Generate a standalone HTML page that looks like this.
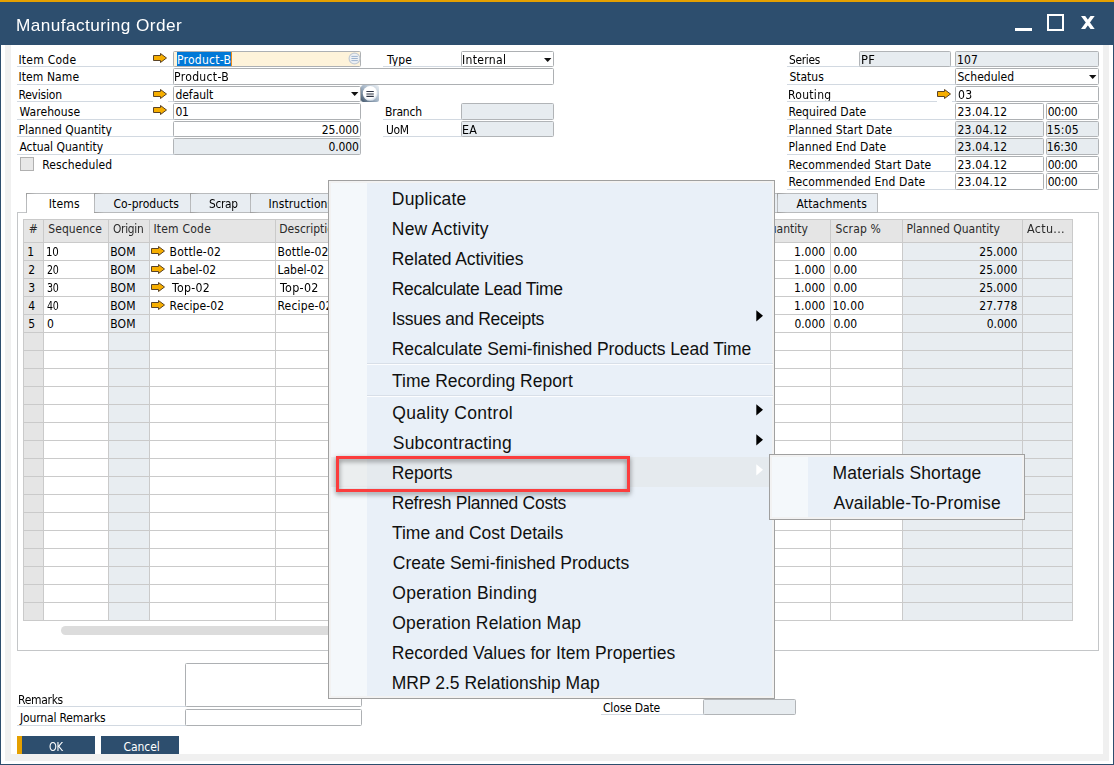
<!DOCTYPE html><html><head><meta charset="utf-8"><title>Manufacturing Order</title><style>
*{box-sizing:border-box;margin:0;padding:0}
html,body{width:1114px;height:765px;overflow:hidden;background:#fff}
body{position:relative;font-family:"DejaVu Sans Condensed", "Liberation Sans", sans-serif;font-size:12px;color:#000}
.lb{font-family:"Liberation Sans", sans-serif}
.a{position:absolute}
.t{position:absolute;white-space:nowrap}
.ul{position:absolute;height:1px;background:#d2d9e1}
.f{position:absolute;height:16px;border:1px solid #adb0b3;border-radius:1.5px;background:#fff}
.f.d{background:#e7ecf0;border-color:#b1b4b7}
.tab{position:absolute;top:193px;height:20px;border:1px solid #b9bbbd;background:#e8edf2}
.tab.on{background:#fff;border-bottom:none;height:20px;z-index:2}
.btn{position:absolute;top:736px;height:18px;width:78px;background:#2d4e6e}
</style></head><body>
<div class="a" style="left:0;top:0;width:1114px;height:765px;border:1px solid #2d4e6e;border-top:none"></div>
<div class="a" style="left:5px;top:45px;width:1104px;height:716px;background:#f0f0f0"></div>
<div class="a" style="left:11px;top:45px;width:1092px;height:709px;background:#fff"></div>
<div class="a" style="left:0;top:0;width:1114px;height:45px;background:#2d4e6e"></div>
<div class="a" style="left:0;top:0;width:1114px;height:2px;background:#e5a000"></div>
<div class="t lb" style="left:15.99px;top:14.50px;line-height:22px;height:22px;font-size:17px;letter-spacing:0.425px;transform:scaleX(1.0129);transform-origin:0 0;color:#fff">Manufacturing Order</div>
<div class="a" style="left:1015px;top:28px;width:17px;height:3px;background:#fff"></div>
<div class="a" style="left:1047px;top:14px;width:17px;height:17px;border:2px solid #fff"></div>
<svg class="a" style="left:1080.7px;top:15.9px" width="14" height="14" viewBox="0 0 14 14"><path d="M0 0H4.2L13.7 13.1H9.5Z M9.5 0H13.7L4.2 13.1H0Z" fill="#fff"/></svg>
<div class="t" style="left:18.40px;top:52.00px;line-height:16px;height:16px;letter-spacing:0.262px">Item Code</div>
<div class="ul" style="left:17px;top:66px;width:157px"></div>
<div class="t" style="left:18.40px;top:69.00px;line-height:16px;height:16px;letter-spacing:0.099px">Item Name</div>
<div class="ul" style="left:17px;top:84px;width:157px"></div>
<div class="t" style="left:18.40px;top:87.00px;line-height:16px;height:16px;letter-spacing:-0.203px">Revision</div>
<div class="ul" style="left:17px;top:101px;width:157px"></div>
<div class="t" style="left:19.40px;top:104.00px;line-height:16px;height:16px;letter-spacing:0.106px">Warehouse</div>
<div class="ul" style="left:17px;top:119px;width:157px"></div>
<div class="t" style="left:18.40px;top:122.00px;line-height:16px;height:16px;letter-spacing:0.013px">Planned Quantity</div>
<div class="ul" style="left:17px;top:136px;width:157px"></div>
<div class="t" style="left:19.40px;top:139.00px;line-height:16px;height:16px;letter-spacing:-0.013px">Actual Quantity</div>
<div class="ul" style="left:17px;top:154px;width:157px"></div>
<svg class="a" style="left:153px;top:53px;background:#fff" width="15" height="13" viewBox="0 0 15 13"><path d="M0.5 2.5H7.5V0.5L13.5 5L7.5 9.5V7.5H0.5Z" fill="#f6ae00" stroke="#5a4326" stroke-width="1" stroke-linejoin="miter"/></svg>
<svg class="a" style="left:153px;top:89px;background:#fff" width="15" height="13" viewBox="0 0 15 13"><path d="M0.5 2.5H7.5V0.5L13.5 5L7.5 9.5V7.5H0.5Z" fill="#f6ae00" stroke="#5a4326" stroke-width="1" stroke-linejoin="miter"/></svg>
<svg class="a" style="left:153px;top:105px;background:#fff" width="15" height="13" viewBox="0 0 15 13"><path d="M0.5 2.5H7.5V0.5L13.5 5L7.5 9.5V7.5H0.5Z" fill="#f6ae00" stroke="#5a4326" stroke-width="1" stroke-linejoin="miter"/></svg>
<div class="f" style="left:173px;top:51px;width:188px;background:#fef3da"><div class="a" style="left:3px;top:0;width:54px;height:14px;background:#0078d7"></div><div class="a" style="left:57px;top:0;width:1px;height:14px;background:#e88a1a"></div></div>
<div class="t" style="left:177.00px;top:52.00px;line-height:16px;height:16px;letter-spacing:0.261px;color:#fff">Product-B</div>
<svg class="a" style="left:347.5px;top:52px" width="13" height="13" viewBox="0 0 13 13"><circle cx="6.5" cy="6.5" r="5.4" fill="#eef1f4" stroke="#c3cbd4" stroke-width="1.2"/><path d="M3.4 4.4h6.4M3.4 6.5h6.4M3.4 8.6h6.4" stroke="#9db3cf" stroke-width="1"/></svg>
<div class="f" style="left:173px;top:68px;height:17px;width:381px"></div>
<div class="t" style="left:174.39px;top:69.00px;line-height:16px;height:16px;letter-spacing:0.300px;transform:scaleX(1.0093);transform-origin:0 0">Product-B</div>
<div class="f" style="left:173px;top:86px;width:188px"></div>
<div class="t" style="left:175.40px;top:87.00px;line-height:16px;height:16px;letter-spacing:-0.009px">default</div>
<svg class="a" style="left:351px;top:92px" width="8" height="5" viewBox="0 0 8 5"><path d="M0 0H7.4L3.7 4.1Z" fill="#111"/></svg>
<svg class="a" style="left:361px;top:85px" width="18" height="17" viewBox="0 0 18 17"><defs><linearGradient id="rb" x1="0" y1="1" x2="1" y2="0"><stop offset="0" stop-color="#3f5368"/><stop offset="0.45" stop-color="#9fb0c2"/><stop offset="1" stop-color="#edf2f6"/></linearGradient><radialGradient id="rc" cx="0.45" cy="0.4" r="0.6"><stop offset="0.7" stop-color="#fff"/><stop offset="1" stop-color="#d3dde8"/></radialGradient></defs><rect x="0" y="0" width="18" height="17" rx="2.5" fill="url(#rb)"/><circle cx="9.2" cy="8.4" r="7.4" fill="url(#rc)"/><path d="M5.4 6.5h7.4M5.4 9h7.4M5.4 11.4h7.4" stroke="#2b3242" stroke-width="1.1"/></svg>
<div class="f" style="left:173px;top:103px;height:17px;width:188px"></div>
<div class="t" style="left:175.40px;top:104.00px;line-height:16px;height:16px;letter-spacing:-0.267px">01</div>
<div class="f" style="left:173px;top:121px;width:188px"></div>
<div class="t" style="left:321.70px;top:122.00px;line-height:16px;height:16px;letter-spacing:-0.139px">25.000</div>
<div class="f d" style="left:173px;top:138px;height:17px;width:188px"></div>
<div class="t" style="left:328.40px;top:139.00px;line-height:16px;height:16px;letter-spacing:-0.132px">0.000</div>
<div class="a" style="left:20px;top:157px;width:14px;height:14px;border:1px solid #b0b0b0;background:#e8e8e8"></div>
<div class="t" style="left:42.30px;top:157.00px;line-height:16px;height:16px;letter-spacing:0.100px">Rescheduled</div>
<div class="t" style="left:387.00px;top:52.00px;line-height:16px;height:16px;letter-spacing:0.112px">Type</div>
<div class="ul" style="left:383px;top:66px;width:79px"></div>
<div class="t" style="left:385.00px;top:104.00px;line-height:16px;height:16px;letter-spacing:-0.207px">Branch</div>
<div class="ul" style="left:383px;top:119px;width:79px"></div>
<div class="t" style="left:386.00px;top:122.00px;line-height:16px;height:16px;letter-spacing:-0.300px;transform:scaleX(0.9953);transform-origin:0 0">UoM</div>
<div class="ul" style="left:383px;top:136px;width:79px"></div>
<div class="f" style="left:461px;top:51px;width:93px"></div>
<div class="t" style="left:462.19px;top:52.00px;line-height:16px;height:16px;letter-spacing:0.300px;transform:scaleX(1.0076);transform-origin:0 0">Internal</div>
<svg class="a" style="left:543.5px;top:57.5px" width="8" height="5" viewBox="0 0 8 5"><path d="M0 0H7.4L3.7 4.1Z" fill="#111"/></svg>
<div class="f d" style="left:461px;top:103px;height:17px;width:93px"></div>
<div class="f d" style="left:461px;top:121px;width:93px"></div>
<div class="t" style="left:462.17px;top:122.00px;line-height:16px;height:16px;letter-spacing:0.300px;transform:scaleX(1.0340);transform-origin:0 0">EA</div>
<div class="t" style="left:789.40px;top:52.00px;line-height:16px;height:16px;letter-spacing:-0.300px;transform:scaleX(0.9850);transform-origin:0 0">Series</div>
<div class="ul" style="left:787px;top:66px;width:169px"></div>
<div class="t" style="left:789.40px;top:69.00px;line-height:16px;height:16px;letter-spacing:0.005px">Status</div>
<div class="ul" style="left:787px;top:84px;width:169px"></div>
<div class="t" style="left:788.40px;top:87.00px;line-height:16px;height:16px;letter-spacing:0.300px;transform:scaleX(1.0004);transform-origin:0 0">Routing</div>
<div class="ul" style="left:787px;top:101px;width:169px"></div>
<div class="t" style="left:788.40px;top:104.00px;line-height:16px;height:16px;letter-spacing:0.053px">Required Date</div>
<div class="ul" style="left:787px;top:119px;width:169px"></div>
<div class="t" style="left:788.40px;top:122.00px;line-height:16px;height:16px;letter-spacing:0.077px">Planned Start Date</div>
<div class="ul" style="left:787px;top:136px;width:169px"></div>
<div class="t" style="left:788.40px;top:139.00px;line-height:16px;height:16px;letter-spacing:0.077px">Planned End Date</div>
<div class="ul" style="left:787px;top:154px;width:169px"></div>
<div class="t" style="left:788.40px;top:157.00px;line-height:16px;height:16px;letter-spacing:0.128px">Recommended Start Date</div>
<div class="ul" style="left:787px;top:171px;width:169px"></div>
<div class="t" style="left:788.40px;top:174.00px;line-height:16px;height:16px;letter-spacing:0.134px">Recommended End Date</div>
<div class="ul" style="left:787px;top:189px;width:169px"></div>
<div class="f d" style="left:859px;top:51px;width:92px"></div>
<div class="t" style="left:860.53px;top:52.00px;line-height:16px;height:16px;letter-spacing:0.300px;transform:scaleX(1.0669);transform-origin:0 0">PF</div>
<div class="f d" style="left:955px;top:51px;width:144px"></div>
<div class="t" style="left:956.90px;top:52.00px;line-height:16px;height:16px;letter-spacing:0.133px">107</div>
<div class="f" style="left:955px;top:68px;height:17px;width:144px"></div>
<div class="t" style="left:957.50px;top:69.00px;line-height:16px;height:16px;letter-spacing:0.010px">Scheduled</div>
<svg class="a" style="left:1088.5px;top:74.5px" width="8" height="5" viewBox="0 0 8 5"><path d="M0 0H7.4L3.7 4.1Z" fill="#111"/></svg>
<svg class="a" style="left:937px;top:89px;background:#fff" width="15" height="13" viewBox="0 0 15 13"><path d="M0.5 2.5H7.5V0.5L13.5 5L7.5 9.5V7.5H0.5Z" fill="#f6ae00" stroke="#5a4326" stroke-width="1" stroke-linejoin="miter"/></svg>
<div class="f" style="left:955px;top:86px;width:144px"></div>
<div class="t" style="left:957.50px;top:87.00px;line-height:16px;height:16px;letter-spacing:0.300px;transform:scaleX(1.0101);transform-origin:0 0">03</div>
<div class="f" style="left:955px;top:103px;width:89px;height:17px"></div>
<div class="f" style="left:1046px;top:103px;width:53px;height:17px"></div>
<div class="t" style="left:957.50px;top:104.00px;line-height:16px;height:16px;letter-spacing:0.230px">23.04.12</div>
<div class="t" style="left:1047.70px;top:104.00px;line-height:16px;height:16px;letter-spacing:-0.285px">00:00</div>
<div class="f d" style="left:955px;top:121px;width:89px;height:16px"></div>
<div class="f d" style="left:1046px;top:121px;width:53px;height:16px"></div>
<div class="t" style="left:957.50px;top:122.00px;line-height:16px;height:16px;letter-spacing:0.230px">23.04.12</div>
<div class="t" style="left:1046.70px;top:122.00px;line-height:16px;height:16px;letter-spacing:0.215px">15:05</div>
<div class="f d" style="left:955px;top:138px;width:89px;height:17px"></div>
<div class="f d" style="left:1046px;top:138px;width:53px;height:17px"></div>
<div class="t" style="left:957.50px;top:139.00px;line-height:16px;height:16px;letter-spacing:0.230px">23.04.12</div>
<div class="t" style="left:1046.70px;top:139.00px;line-height:16px;height:16px;letter-spacing:-0.035px">16:30</div>
<div class="f" style="left:955px;top:156px;width:89px;height:16px"></div>
<div class="f" style="left:1046px;top:156px;width:53px;height:16px"></div>
<div class="t" style="left:957.50px;top:157.00px;line-height:16px;height:16px;letter-spacing:0.230px">23.04.12</div>
<div class="t" style="left:1047.70px;top:157.00px;line-height:16px;height:16px;letter-spacing:-0.285px">00:00</div>
<div class="f" style="left:955px;top:173px;width:89px;height:17px"></div>
<div class="f" style="left:1046px;top:173px;width:53px;height:17px"></div>
<div class="t" style="left:957.50px;top:174.00px;line-height:16px;height:16px;letter-spacing:0.230px">23.04.12</div>
<div class="t" style="left:1047.70px;top:174.00px;line-height:16px;height:16px;letter-spacing:-0.285px">00:00</div>
<div class="a" style="left:17px;top:212px;width:1082px;height:439px;border:1px solid #c4c6c8;background:#fff"></div>
<div class="tab" style="left:340px;width:438px"></div>
<div class="a" style="left:340px;top:193px;width:10px;height:1px;background:linear-gradient(90deg,#9c9c9c,#b9bbbd);z-index:3"></div>
<div class="a" style="left:340px;top:193px;width:1px;height:8px;background:linear-gradient(180deg,#9c9c9c,#b9bbbd);z-index:3"></div>
<div class="a" style="left:340px;top:212px;width:10px;height:1px;background:linear-gradient(90deg,#9c9c9c,#b9bbbd);z-index:3"></div>
<div class="tab on" style="left:26px;width:69px"></div>
<div class="t" style="left:48.70px;top:196.00px;line-height:16px;height:16px;letter-spacing:0.181px;z-index:3">Items</div>
<div class="a" style="left:26px;top:193px;width:10px;height:1px;background:linear-gradient(90deg,#9c9c9c,#b9bbbd);z-index:3"></div>
<div class="a" style="left:26px;top:193px;width:1px;height:8px;background:linear-gradient(180deg,#9c9c9c,#b9bbbd);z-index:3"></div>
<div class="tab" style="left:94px;width:97px"></div>
<div class="t" style="left:113.40px;top:196.00px;line-height:16px;height:16px;letter-spacing:0.004px;z-index:3">Co-products</div>
<div class="a" style="left:94px;top:193px;width:10px;height:1px;background:linear-gradient(90deg,#9c9c9c,#b9bbbd);z-index:3"></div>
<div class="a" style="left:94px;top:193px;width:1px;height:8px;background:linear-gradient(180deg,#9c9c9c,#b9bbbd);z-index:3"></div>
<div class="a" style="left:94px;top:212px;width:10px;height:1px;background:linear-gradient(90deg,#9c9c9c,#b9bbbd);z-index:3"></div>
<div class="tab" style="left:190px;width:61px"></div>
<div class="t" style="left:209.30px;top:196.00px;line-height:16px;height:16px;letter-spacing:-0.300px;transform:scaleX(0.9817);transform-origin:0 0;z-index:3">Scrap</div>
<div class="a" style="left:190px;top:193px;width:10px;height:1px;background:linear-gradient(90deg,#9c9c9c,#b9bbbd);z-index:3"></div>
<div class="a" style="left:190px;top:193px;width:1px;height:8px;background:linear-gradient(180deg,#9c9c9c,#b9bbbd);z-index:3"></div>
<div class="a" style="left:190px;top:212px;width:10px;height:1px;background:linear-gradient(90deg,#9c9c9c,#b9bbbd);z-index:3"></div>
<div class="tab" style="left:250px;width:90px"></div>
<div class="t" style="left:268.40px;top:196.00px;line-height:16px;height:16px;letter-spacing:0.130px;z-index:3">Instructions</div>
<div class="a" style="left:250px;top:193px;width:10px;height:1px;background:linear-gradient(90deg,#9c9c9c,#b9bbbd);z-index:3"></div>
<div class="a" style="left:250px;top:193px;width:1px;height:8px;background:linear-gradient(180deg,#9c9c9c,#b9bbbd);z-index:3"></div>
<div class="a" style="left:250px;top:212px;width:10px;height:1px;background:linear-gradient(90deg,#9c9c9c,#b9bbbd);z-index:3"></div>
<div class="tab" style="left:777px;width:101px"></div>
<div class="t" style="left:796.50px;top:196.00px;line-height:16px;height:16px;letter-spacing:0.144px;z-index:3">Attachments</div>
<div class="a" style="left:777px;top:193px;width:10px;height:1px;background:linear-gradient(90deg,#9c9c9c,#b9bbbd);z-index:3"></div>
<div class="a" style="left:777px;top:193px;width:1px;height:8px;background:linear-gradient(180deg,#9c9c9c,#b9bbbd);z-index:3"></div>
<div class="a" style="left:777px;top:212px;width:10px;height:1px;background:linear-gradient(90deg,#9c9c9c,#b9bbbd);z-index:3"></div>
<div class="a" style="left:23px;top:219px;width:1050px;height:402px;background:#fff"></div>
<div class="a" style="left:24px;top:220px;width:19px;height:400px;background:#e5e5e5"></div>
<div class="a" style="left:109px;top:243px;width:40px;height:377px;background:#e8edf1"></div>
<div class="a" style="left:903px;top:243px;width:169px;height:377px;background:#e8edf1"></div>
<div class="a" style="left:24px;top:220px;width:1048px;height:22px;background:#e5e5e5"></div>
<div class="a" style="left:23px;top:219px;width:1050px;height:1px;background:#cacaca"></div>
<div class="a" style="left:23px;top:242px;width:1050px;height:1px;background:#cacaca"></div>
<div class="a" style="left:23px;top:260px;width:1050px;height:1px;background:#cacaca"></div>
<div class="a" style="left:23px;top:278px;width:1050px;height:1px;background:#cacaca"></div>
<div class="a" style="left:23px;top:296px;width:1050px;height:1px;background:#cacaca"></div>
<div class="a" style="left:23px;top:314px;width:1050px;height:1px;background:#cacaca"></div>
<div class="a" style="left:23px;top:332px;width:1050px;height:1px;background:#cacaca"></div>
<div class="a" style="left:23px;top:350px;width:1050px;height:1px;background:#cacaca"></div>
<div class="a" style="left:23px;top:368px;width:1050px;height:1px;background:#cacaca"></div>
<div class="a" style="left:23px;top:386px;width:1050px;height:1px;background:#cacaca"></div>
<div class="a" style="left:23px;top:404px;width:1050px;height:1px;background:#cacaca"></div>
<div class="a" style="left:23px;top:422px;width:1050px;height:1px;background:#cacaca"></div>
<div class="a" style="left:23px;top:440px;width:1050px;height:1px;background:#cacaca"></div>
<div class="a" style="left:23px;top:458px;width:1050px;height:1px;background:#cacaca"></div>
<div class="a" style="left:23px;top:476px;width:1050px;height:1px;background:#cacaca"></div>
<div class="a" style="left:23px;top:494px;width:1050px;height:1px;background:#cacaca"></div>
<div class="a" style="left:23px;top:512px;width:1050px;height:1px;background:#cacaca"></div>
<div class="a" style="left:23px;top:530px;width:1050px;height:1px;background:#cacaca"></div>
<div class="a" style="left:23px;top:548px;width:1050px;height:1px;background:#cacaca"></div>
<div class="a" style="left:23px;top:566px;width:1050px;height:1px;background:#cacaca"></div>
<div class="a" style="left:23px;top:584px;width:1050px;height:1px;background:#cacaca"></div>
<div class="a" style="left:23px;top:602px;width:1050px;height:1px;background:#cacaca"></div>
<div class="a" style="left:23px;top:620px;width:1050px;height:1px;background:#cacaca"></div>
<div class="a" style="left:23px;top:219px;width:1px;height:402px;background:#cacaca"></div>
<div class="a" style="left:43px;top:219px;width:1px;height:402px;background:#cacaca"></div>
<div class="a" style="left:108px;top:219px;width:1px;height:402px;background:#cacaca"></div>
<div class="a" style="left:149px;top:219px;width:1px;height:402px;background:#cacaca"></div>
<div class="a" style="left:275px;top:219px;width:1px;height:402px;background:#cacaca"></div>
<div class="a" style="left:420px;top:219px;width:1px;height:402px;background:#cacaca"></div>
<div class="a" style="left:520px;top:219px;width:1px;height:402px;background:#cacaca"></div>
<div class="a" style="left:620px;top:219px;width:1px;height:402px;background:#cacaca"></div>
<div class="a" style="left:700px;top:219px;width:1px;height:402px;background:#cacaca"></div>
<div class="a" style="left:830px;top:219px;width:1px;height:402px;background:#cacaca"></div>
<div class="a" style="left:902px;top:219px;width:1px;height:402px;background:#cacaca"></div>
<div class="a" style="left:1022px;top:219px;width:1px;height:402px;background:#cacaca"></div>
<div class="a" style="left:1072px;top:219px;width:1px;height:402px;background:#cacaca"></div>
<div class="t" style="left:28.70px;top:221.00px;line-height:16px;height:16px;color:#2a2a2a">#</div>
<div class="t" style="left:48.30px;top:221.00px;line-height:16px;height:16px;letter-spacing:0.054px;color:#2a2a2a">Sequence</div>
<div class="t" style="left:113.40px;top:221.00px;line-height:16px;height:16px;letter-spacing:-0.300px;transform:scaleX(0.9839);transform-origin:0 0;color:#2a2a2a">Origin</div>
<div class="t" style="left:153.40px;top:221.00px;line-height:16px;height:16px;letter-spacing:0.225px;color:#2a2a2a">Item Code</div>
<div class="t" style="left:279.30px;top:221.00px;line-height:16px;height:16px;color:#2a2a2a">Description</div>
<div class="t" style="left:731.52px;top:221.00px;line-height:16px;height:16px;color:#2a2a2a">Base Quantity</div>
<div class="t" style="left:835.40px;top:221.00px;line-height:16px;height:16px;letter-spacing:0.179px;color:#2a2a2a">Scrap %</div>
<div class="t" style="left:906.40px;top:221.00px;line-height:16px;height:16px;letter-spacing:0.007px;color:#2a2a2a">Planned Quantity</div>
<div class="t" style="left:1027.30px;top:221.00px;line-height:16px;height:16px;letter-spacing:0.300px;transform:scaleX(1.0380);transform-origin:0 0;color:#2a2a2a">Actu...</div>
<div class="t" style="left:27.20px;top:244.00px;line-height:16px;height:16px">1</div>
<div class="t" style="left:45.95px;top:244.00px;line-height:16px;height:16px;letter-spacing:-0.300px;transform:scaleX(0.9469);transform-origin:0 0">10</div>
<div class="t" style="left:110.20px;top:244.00px;line-height:16px;height:16px;letter-spacing:0.204px">BOM</div>
<svg class="a" style="left:151px;top:246px" width="15" height="10" viewBox="0 0 15 10"><path d="M0.5 2.5H7.5V0.5L13.5 5L7.5 9.5V7.5H0.5Z" fill="#f6ae00" stroke="#5a4326" stroke-width="1" stroke-linejoin="miter"/></svg>
<div class="t" style="left:169.60px;top:244.00px;line-height:16px;height:16px;letter-spacing:0.190px">Bottle-02</div>
<div class="t" style="left:277.50px;top:244.00px;line-height:16px;height:16px;letter-spacing:0.140px">Bottle-02</div>
<div class="t" style="left:794.10px;top:244.00px;line-height:16px;height:16px;letter-spacing:0.043px">1.000</div>
<div class="t" style="left:833.60px;top:244.00px;line-height:16px;height:16px;letter-spacing:-0.187px">0.00</div>
<div class="t" style="left:979.20px;top:244.00px;line-height:16px;height:16px;letter-spacing:0.081px">25.000</div>
<div class="t" style="left:28.20px;top:262.00px;line-height:16px;height:16px">2</div>
<div class="t" style="left:46.90px;top:262.00px;line-height:16px;height:16px;letter-spacing:-0.300px;transform:scaleX(0.8771);transform-origin:0 0">20</div>
<div class="t" style="left:110.20px;top:262.00px;line-height:16px;height:16px;letter-spacing:0.204px">BOM</div>
<svg class="a" style="left:151px;top:264px" width="15" height="10" viewBox="0 0 15 10"><path d="M0.5 2.5H7.5V0.5L13.5 5L7.5 9.5V7.5H0.5Z" fill="#f6ae00" stroke="#5a4326" stroke-width="1" stroke-linejoin="miter"/></svg>
<div class="t" style="left:169.60px;top:262.00px;line-height:16px;height:16px;letter-spacing:-0.027px">Label-02</div>
<div class="t" style="left:277.50px;top:262.00px;line-height:16px;height:16px;letter-spacing:-0.027px">Label-02</div>
<div class="t" style="left:794.10px;top:262.00px;line-height:16px;height:16px;letter-spacing:0.043px">1.000</div>
<div class="t" style="left:833.60px;top:262.00px;line-height:16px;height:16px;letter-spacing:-0.187px">0.00</div>
<div class="t" style="left:979.20px;top:262.00px;line-height:16px;height:16px;letter-spacing:0.081px">25.000</div>
<div class="t" style="left:28.20px;top:280.00px;line-height:16px;height:16px">3</div>
<div class="t" style="left:46.90px;top:280.00px;line-height:16px;height:16px;letter-spacing:-0.300px;transform:scaleX(0.8771);transform-origin:0 0">30</div>
<div class="t" style="left:110.20px;top:280.00px;line-height:16px;height:16px;letter-spacing:0.204px">BOM</div>
<svg class="a" style="left:151px;top:282px" width="15" height="10" viewBox="0 0 15 10"><path d="M0.5 2.5H7.5V0.5L13.5 5L7.5 9.5V7.5H0.5Z" fill="#f6ae00" stroke="#5a4326" stroke-width="1" stroke-linejoin="miter"/></svg>
<div class="t" style="left:172.42px;top:280.00px;line-height:16px;height:16px;letter-spacing:0.300px;transform:scaleX(1.0168);transform-origin:0 0">Top-02</div>
<div class="t" style="left:280.24px;top:280.00px;line-height:16px;height:16px;letter-spacing:0.300px;transform:scaleX(1.0355);transform-origin:0 0">Top-02</div>
<div class="t" style="left:794.10px;top:280.00px;line-height:16px;height:16px;letter-spacing:0.043px">1.000</div>
<div class="t" style="left:833.60px;top:280.00px;line-height:16px;height:16px;letter-spacing:-0.187px">0.00</div>
<div class="t" style="left:979.20px;top:280.00px;line-height:16px;height:16px;letter-spacing:0.081px">25.000</div>
<div class="t" style="left:28.20px;top:298.00px;line-height:16px;height:16px">4</div>
<div class="t" style="left:46.90px;top:298.00px;line-height:16px;height:16px;letter-spacing:-0.300px;transform:scaleX(0.8771);transform-origin:0 0">40</div>
<div class="t" style="left:110.20px;top:298.00px;line-height:16px;height:16px;letter-spacing:0.204px">BOM</div>
<svg class="a" style="left:151px;top:300px" width="15" height="10" viewBox="0 0 15 10"><path d="M0.5 2.5H7.5V0.5L13.5 5L7.5 9.5V7.5H0.5Z" fill="#f6ae00" stroke="#5a4326" stroke-width="1" stroke-linejoin="miter"/></svg>
<div class="t" style="left:169.60px;top:298.00px;line-height:16px;height:16px;letter-spacing:0.112px">Recipe-02</div>
<div class="t" style="left:277.50px;top:298.00px;line-height:16px;height:16px;letter-spacing:0.162px">Recipe-02</div>
<div class="t" style="left:794.10px;top:298.00px;line-height:16px;height:16px;letter-spacing:0.043px">1.000</div>
<div class="t" style="left:832.60px;top:298.00px;line-height:16px;height:16px;letter-spacing:0.143px">10.00</div>
<div class="t" style="left:979.20px;top:298.00px;line-height:16px;height:16px;letter-spacing:0.081px">27.778</div>
<div class="t" style="left:28.20px;top:316.00px;line-height:16px;height:16px">5</div>
<div class="t" style="left:46.90px;top:316.00px;line-height:16px;height:16px">0</div>
<div class="t" style="left:110.20px;top:316.00px;line-height:16px;height:16px;letter-spacing:0.204px">BOM</div>
<div class="t" style="left:794.40px;top:316.00px;line-height:16px;height:16px;letter-spacing:-0.032px">0.000</div>
<div class="t" style="left:833.60px;top:316.00px;line-height:16px;height:16px;letter-spacing:-0.187px">0.00</div>
<div class="t" style="left:986.80px;top:316.00px;line-height:16px;height:16px;letter-spacing:-0.082px">0.000</div>
<div class="a" style="left:61px;top:626px;width:700px;height:9px;border-radius:5px;background:#dcdcdc"></div>
<div class="t" style="left:18.30px;top:692.00px;line-height:16px;height:16px;letter-spacing:-0.300px;transform:scaleX(0.9994);transform-origin:0 0">Remarks</div>
<div class="ul" style="left:17px;top:706px;width:169px"></div>
<div class="t" style="left:20.00px;top:710.00px;line-height:16px;height:16px;letter-spacing:-0.155px">Journal Remarks</div>
<div class="ul" style="left:17px;top:725px;width:169px"></div>
<div class="f" style="left:185px;top:663px;width:177px;height:44px"></div>
<div class="f" style="left:185px;top:709px;width:177px;height:17px"></div>
<div class="t" style="left:603.00px;top:700.00px;line-height:16px;height:16px;letter-spacing:-0.167px">Close Date</div>
<div class="ul" style="left:601px;top:714px;width:103px"></div>
<div class="f d" style="left:703px;top:699px;width:93px"></div>
<div class="btn" style="left:17px"><div class="a" style="left:0;top:0;width:5px;height:18px;background:#e5a000"></div></div>
<div class="btn" style="left:101px"></div>
<div class="t" style="left:48.60px;top:739.00px;line-height:16px;height:16px;letter-spacing:-0.300px;transform:scaleX(0.9200);transform-origin:0 0;color:#fff">OK</div>
<div class="t" style="left:123.50px;top:739.00px;line-height:16px;height:16px;letter-spacing:-0.076px;color:#fff">Cancel</div>
<div class="a" style="left:328px;top:180px;width:447px;height:519px;border:1px solid #a0a0a0;background:#e9f0f8;box-shadow:inset 0 0 0 2px #f2f2f2;z-index:5"></div>
<div class="a" style="left:331px;top:183px;width:36px;height:513px;background:#f4f8fb;z-index:5"></div>
<div class="a" style="left:331px;top:457px;width:441px;height:30px;background:rgba(226,228,228,.5);z-index:5"></div>
<div class="t lb" style="left:391.80px;top:187.50px;line-height:23px;height:23px;font-size:17.5px;letter-spacing:0.197px;color:#101010;z-index:6">Duplicate</div>
<div class="t lb" style="left:391.80px;top:217.50px;line-height:23px;height:23px;font-size:17.5px;letter-spacing:0.223px;color:#101010;z-index:6">New Activity</div>
<div class="t lb" style="left:391.80px;top:247.50px;line-height:23px;height:23px;font-size:17.5px;letter-spacing:-0.093px;color:#101010;z-index:6">Related Activities</div>
<div class="t lb" style="left:391.80px;top:277.50px;line-height:23px;height:23px;font-size:17.5px;letter-spacing:-0.340px;color:#101010;z-index:6">Recalculate Lead Time</div>
<div class="t lb" style="left:391.80px;top:307.50px;line-height:23px;height:23px;font-size:17.5px;letter-spacing:-0.285px;color:#101010;z-index:6">Issues and Receipts</div>
<svg class="a" style="left:755.5px;top:310px;z-index:6" width="8" height="12" viewBox="0 0 8 12"><path d="M0.3 0.2V11.4L7 5.8Z" fill="#000"/></svg>
<div class="t lb" style="left:391.80px;top:337.50px;line-height:23px;height:23px;font-size:17.5px;letter-spacing:-0.077px;color:#101010;z-index:6">Recalculate Semi-finished Products Lead Time</div>
<div class="t lb" style="left:391.90px;top:369.50px;line-height:23px;height:23px;font-size:17.5px;letter-spacing:0.030px;color:#101010;z-index:6">Time Recording Report</div>
<div class="t lb" style="left:392.30px;top:401.50px;line-height:23px;height:23px;font-size:17.5px;letter-spacing:0.325px;color:#101010;z-index:6">Quality Control</div>
<svg class="a" style="left:755.5px;top:404px;z-index:6" width="8" height="12" viewBox="0 0 8 12"><path d="M0.3 0.2V11.4L7 5.8Z" fill="#000"/></svg>
<div class="t lb" style="left:392.80px;top:431.50px;line-height:23px;height:23px;font-size:17.5px;letter-spacing:0.161px;color:#101010;z-index:6">Subcontracting</div>
<svg class="a" style="left:755.5px;top:434px;z-index:6" width="8" height="12" viewBox="0 0 8 12"><path d="M0.3 0.2V11.4L7 5.8Z" fill="#000"/></svg>
<div class="t lb" style="left:391.80px;top:461.50px;line-height:23px;height:23px;font-size:17.5px;letter-spacing:-0.104px;color:#101010;z-index:6">Reports</div>
<svg class="a" style="left:755.5px;top:464px;z-index:6" width="8" height="12" viewBox="0 0 8 12"><path d="M0.3 0.2V11.4L7 5.8Z" fill="#fff"/></svg>
<div class="t lb" style="left:391.80px;top:491.50px;line-height:23px;height:23px;font-size:17.5px;letter-spacing:-0.275px;color:#101010;z-index:6">Refresh Planned Costs</div>
<div class="t lb" style="left:391.90px;top:521.50px;line-height:23px;height:23px;font-size:17.5px;letter-spacing:-0.007px;color:#101010;z-index:6">Time and Cost Details</div>
<div class="t lb" style="left:392.80px;top:551.50px;line-height:23px;height:23px;font-size:17.5px;letter-spacing:-0.035px;color:#101010;z-index:6">Create Semi-finished Products</div>
<div class="t lb" style="left:392.30px;top:581.50px;line-height:23px;height:23px;font-size:17.5px;letter-spacing:0.290px;color:#101010;z-index:6">Operation Binding</div>
<div class="t lb" style="left:392.30px;top:611.50px;line-height:23px;height:23px;font-size:17.5px;letter-spacing:0.186px;color:#101010;z-index:6">Operation Relation Map</div>
<div class="t lb" style="left:391.80px;top:641.50px;line-height:23px;height:23px;font-size:17.5px;letter-spacing:0.050px;color:#101010;z-index:6">Recorded Values for Item Properties</div>
<div class="t lb" style="left:391.80px;top:671.50px;line-height:23px;height:23px;font-size:17.5px;color:#101010;z-index:6">MRP 2.5 Relationship Map</div>
<div class="a" style="left:367px;top:363px;width:406px;height:1px;background:#d8dfe8;z-index:6"></div>
<div class="a" style="left:367px;top:364px;width:406px;height:1px;background:#fcfdff;z-index:6"></div>
<div class="a" style="left:367px;top:395px;width:406px;height:1px;background:#d8dfe8;z-index:6"></div>
<div class="a" style="left:367px;top:396px;width:406px;height:1px;background:#fcfdff;z-index:6"></div>
<div class="a" style="left:769px;top:454px;width:256px;height:66px;border:1px solid #a0a0a0;background:#e9f0f8;box-shadow:inset 0 0 0 2px #f2f2f2;z-index:7"></div>
<div class="a" style="left:772px;top:457px;width:36px;height:60px;background:#f4f8fb;z-index:7"></div>
<div class="t lb" style="left:832.50px;top:461.50px;line-height:23px;height:23px;font-size:17.5px;letter-spacing:0.109px;color:#101010;z-index:8">Materials Shortage</div>
<div class="t lb" style="left:833.50px;top:491.50px;line-height:23px;height:23px;font-size:17.5px;letter-spacing:0.111px;color:#101010;z-index:8">Available-To-Promise</div>
<div class="a" style="left:336px;top:456px;width:294px;height:36px;border:3px solid #fb3d3d;filter:drop-shadow(0 2px 2.5px rgba(0,0,0,.5));z-index:9"></div>
</body></html>
